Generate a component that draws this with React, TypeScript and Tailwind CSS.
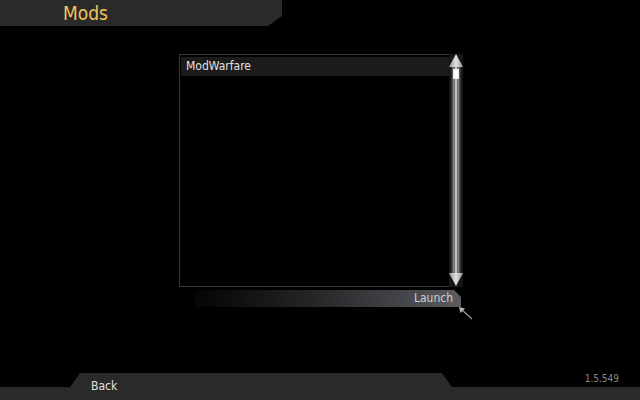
import React from 'react';

const font = { fontFamily: '"DejaVu Sans Condensed", "Noto Sans", sans-serif' };

function ScrollBar() {
  return (
    <svg width="14" height="233" viewBox="0 0 14 233" className="block">
      <defs>
        <linearGradient id="tri" x1="0" y1="0" x2="1" y2="0">
          <stop offset="0" stopColor="#9a9a9a" />
          <stop offset="0.5" stopColor="#e0e0e0" />
          <stop offset="1" stopColor="#9a9a9a" />
        </linearGradient>
      </defs>
      <rect x="0" y="0" width="14" height="233" fill="#161616" />
      <rect x="2" y="12" width="10" height="208" fill="#333" />
      <rect x="3" y="12" width="1" height="208" fill="#555" />
      <rect x="4" y="12" width="2" height="208" fill="#7a7a7a" />
      <rect x="6" y="12" width="2" height="208" fill="#bdbdbd" />
      <rect x="8" y="12" width="2" height="208" fill="#7a7a7a" />
      <rect x="10" y="12" width="1" height="208" fill="#555" />
      <rect x="4" y="15" width="6" height="10" fill="#e6e6e6" />
      <rect x="5" y="16" width="4" height="8" fill="#ffffff" />
      <polygon points="7,0 14,13 0,13" fill="url(#tri)" />
      <polygon points="0,219 14,219 7,232" fill="url(#tri)" />
    </svg>
  );
}

export default function App() {
  return (
    <div className="w-[640px] h-[400px] bg-black flex flex-col overflow-hidden" style={font}>
      <div className="h-[26px] w-[282px] bg-[#2a2a2a] [clip-path:polygon(0_0,100%_0,100%_16px,268px_100%,0_100%)] flex items-center">
        <span className="pl-[63px] text-[19px] leading-[26px] text-[#f0c35c]">Mods</span>
      </div>

      <div className="ml-[179px] mt-[28px] w-[284px] h-[233px] border border-[#383838] flex">
        <div className="flex-1 pt-[2px] pl-[1px]">
          <div className="h-[19px] bg-[#1b1b1b] text-[12px] leading-[19px] text-[#e2e2e2] pl-[5px]">ModWarfare</div>
        </div>
        <div className="w-[14px] -my-[1px] -mr-[1px]">
          <ScrollBar />
        </div>
      </div>

      <div className="relative ml-[195px] mt-[3px] w-[266px] h-[17px]">
        <div className="h-full bg-gradient-to-r from-[#050505] via-[#2a2b2d] to-[#5a5c60] [clip-path:polygon(0_0,259px_0,100%_7px,100%_100%,0_100%)] flex items-center justify-end pr-[8px]">
          <span className="text-[12px] leading-[17px] text-[#d0d0d0]">Launch</span>
        </div>
        <svg width="16" height="16" viewBox="0 0 16 16" className="absolute left-[263px] top-[16px]">
          <line x1="3" y1="3" x2="14" y2="13" stroke="#9a9a9a" strokeWidth="1.2" />
          <polygon points="1,1 7,2.5 2.5,7" fill="#b8b8b8" />
        </svg>
      </div>

      <div className="mt-auto grid h-[27px]">
        <div className="col-start-1 row-start-1 bg-[#2a2a2a] [clip-path:polygon(0_14px,70px_14px,80px_0,442px_0,452px_14px,100%_14px,100%_100%,0_100%)]" />
        <div className="relative col-start-1 row-start-1 flex items-start">
          <span className="pl-[91px] pt-[6px] text-[12px] leading-[15px] text-[#e0e0e0]">Back</span>
          <span className="ml-auto pr-[21px] text-[10px] leading-[12px] text-[#8a8a8a]">1.5.549</span>
        </div>
      </div>
    </div>
  );
}
